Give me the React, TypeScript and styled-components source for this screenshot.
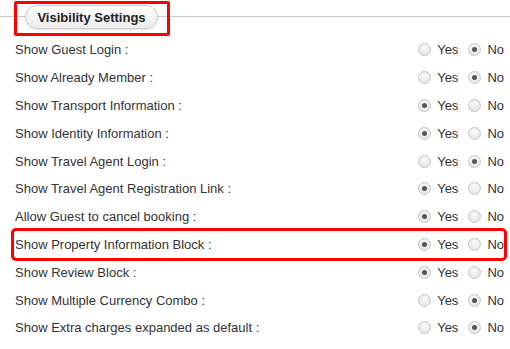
import React from 'react';
import styled, { createGlobalStyle } from 'styled-components';

interface Setting {
  label: string;
  value: boolean;
  highlight?: boolean;
}

const settings: Setting[] = [
  { label: 'Show Guest Login :', value: false },
  { label: 'Show Already Member :', value: false },
  { label: 'Show Transport Information :', value: true },
  { label: 'Show Identity Information :', value: true },
  { label: 'Show Travel Agent Login :', value: false },
  { label: 'Show Travel Agent Registration Link :', value: true },
  { label: 'Allow Guest to cancel booking :', value: true },
  { label: 'Show Property Information Block :', value: true, highlight: true },
  { label: 'Show Review Block :', value: true },
  { label: 'Show Multiple Currency Combo :', value: false },
  { label: 'Show Extra charges expanded as default :', value: false },
];

const GlobalStyle = createGlobalStyle`
  body {
    margin: 0;
    background: #fff;
    font-family: "Liberation Sans", Arial, sans-serif;
    font-size: 13px;
    color: #333;
  }
`;

const Panel = styled.div`
  width: 510px;
  padding-top: 1px;
`;

const Header = styled.div`
  display: flex;
  background: linear-gradient(#ccc, #ccc) 0 15px / 100% 1px no-repeat;
`;

const LegendHighlight = styled.div`
  margin-left: 14px;
  border: 3px solid #f00;
  border-radius: 2px;
  padding: 1px 9px 4px 8px;
`;

const Legend = styled.div`
  height: 22px;
  width: 131px;
  display: flex;
  align-items: center;
  justify-content: center;
  border: 1px solid #ccc;
  border-radius: 12px;
  background: linear-gradient(#ffffff, #ececec);
  box-shadow: 0 1px 2px rgba(0, 0, 0, 0.12);
  font-weight: bold;
  font-size: 13px;
  color: #222;
`;

const List = styled.div`
  display: flex;
  flex-direction: column;
  padding: 0 6px 0 14px;
`;

const Row = styled.div<{ $highlight?: boolean }>`
  height: 27.8px;
  display: flex;
  align-items: center;
  justify-content: space-between;
  padding: 0 0 0 1px;
  outline: ${(p) => (p.$highlight ? '3px solid #f00' : 'none')};
  border-radius: 2px;
`;

const Label = styled.span`
  color: #333;
`;

const Options = styled.div`
  display: flex;
  align-items: center;
`;

const Option = styled.label`
  display: flex;
  align-items: center;
  gap: 6px;
  margin-left: 10px;
  color: #333;
`;

const Radio = styled.input`
  appearance: none;
  margin: 0;
  width: 13px;
  height: 13px;
  border-radius: 50%;
  border: 1px solid #c4c4c4;
  background: radial-gradient(circle at 50% 35%, #fafafa, #e0e0e0);
  box-sizing: border-box;
  position: relative;

  &:checked::after {
    content: '';
    position: absolute;
    left: 3px;
    top: 3px;
    width: 5px;
    height: 5px;
    border-radius: 50%;
    background: #555;
  }
`;

const App: React.FC = () => {
  return (
    <Panel>
      <GlobalStyle />
      <Header>
        <LegendHighlight>
          <Legend>Visibility Settings</Legend>
        </LegendHighlight>
      </Header>
      <List>
        {settings.map((s, i) => (
          <Row key={i} $highlight={s.highlight}>
            <Label>{s.label}</Label>
            <Options>
              <Option>
                <Radio type="radio" name={`opt${i}`} defaultChecked={s.value} />
                Yes
              </Option>
              <Option>
                <Radio type="radio" name={`opt${i}`} defaultChecked={!s.value} />
                No
              </Option>
            </Options>
          </Row>
        ))}
      </List>
    </Panel>
  );
};

export default App;
